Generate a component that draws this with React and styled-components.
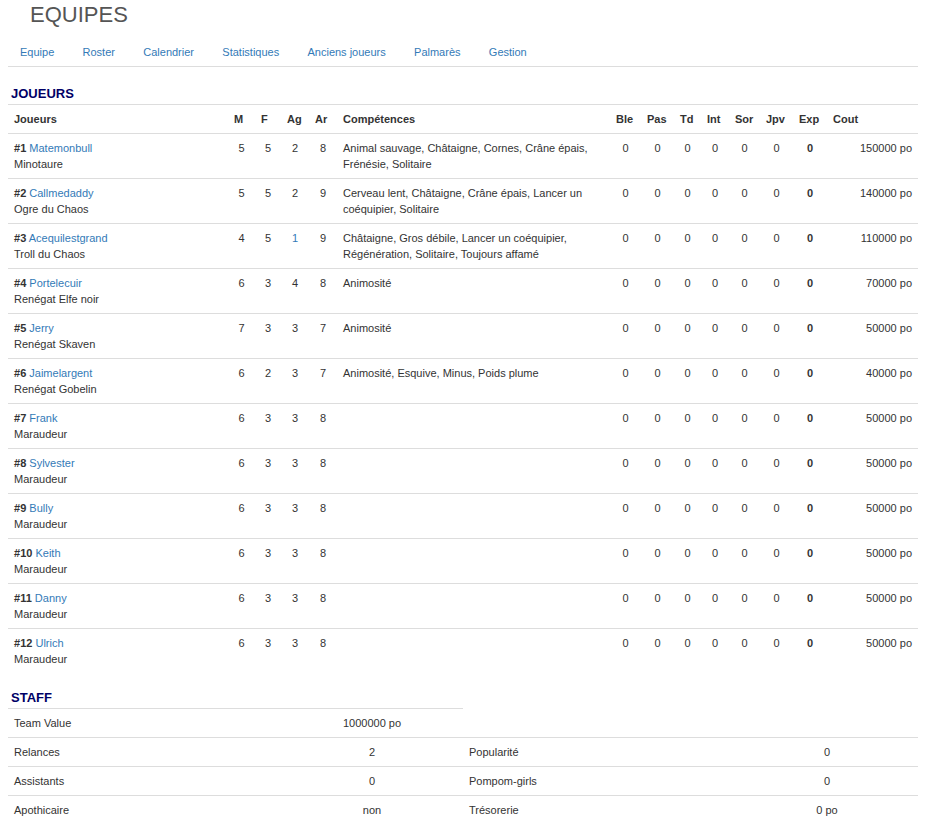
import React from "react";
import { styled, createGlobalStyle } from "styled-components";

const players = [
  { num: 1, name: "Matemonbull", race: "Minotaure", m: 5, f: 5, ag: 2, ar: 8, skills: "Animal sauvage, Châtaigne, Cornes, Crâne épais, Frénésie, Solitaire", cost: 150000 },
  { num: 2, name: "Callmedaddy", race: "Ogre du Chaos", m: 5, f: 5, ag: 2, ar: 9, skills: "Cerveau lent, Châtaigne, Crâne épais, Lancer un coéquipier, Solitaire", cost: 140000 },
  { num: 3, name: "Acequilestgrand", race: "Troll du Chaos", m: 4, f: 5, ag: 1, ar: 9, skills: "Châtaigne, Gros débile, Lancer un coéquipier, Régénération, Solitaire, Toujours affamé", cost: 110000, boosted: ["ag"] },
  { num: 4, name: "Portelecuir", race: "Renégat Elfe noir", m: 6, f: 3, ag: 4, ar: 8, skills: "Animosité", cost: 70000 },
  { num: 5, name: "Jerry", race: "Renégat Skaven", m: 7, f: 3, ag: 3, ar: 7, skills: "Animosité", cost: 50000 },
  { num: 6, name: "Jaimelargent", race: "Renégat Gobelin", m: 6, f: 2, ag: 3, ar: 7, skills: "Animosité, Esquive, Minus, Poids plume", cost: 40000 },
  { num: 7, name: "Frank", race: "Maraudeur", m: 6, f: 3, ag: 3, ar: 8, skills: "", cost: 50000 },
  { num: 8, name: "Sylvester", race: "Maraudeur", m: 6, f: 3, ag: 3, ar: 8, skills: "", cost: 50000 },
  { num: 9, name: "Bully", race: "Maraudeur", m: 6, f: 3, ag: 3, ar: 8, skills: "", cost: 50000 },
  { num: 10, name: "Keith", race: "Maraudeur", m: 6, f: 3, ag: 3, ar: 8, skills: "", cost: 50000 },
  { num: 11, name: "Danny", race: "Maraudeur", m: 6, f: 3, ag: 3, ar: 8, skills: "", cost: 50000 },
  { num: 12, name: "Ulrich", race: "Maraudeur", m: 6, f: 3, ag: 3, ar: 8, skills: "", cost: 50000 },
];

const columns = [
  { label: "Joueurs", width: 220 },
  { label: "M", width: 27 },
  { label: "F", width: 26 },
  { label: "Ag", width: 28 },
  { label: "Ar", width: 28 },
  { label: "Compétences", width: 273 },
  { label: "Ble", width: 31 },
  { label: "Pas", width: 33 },
  { label: "Td", width: 27 },
  { label: "Int", width: 28 },
  { label: "Sor", width: 31 },
  { label: "Jpv", width: 33 },
  { label: "Exp", width: 34 },
  { label: "Cout", width: 91 },
];

const tabs = ["Equipe", "Roster", "Calendrier", "Statistiques", "Anciens joueurs", "Palmarès", "Gestion"];

const GlobalStyle = createGlobalStyle`
  body {
    margin: 0;
    background: #fff;
    font-family: "Liberation Sans", Arial, sans-serif;
    font-size: 11px;
    line-height: 16px;
    color: #333;
  }
`;

const Page = styled.div`
  padding: 0 8px;
`;

const Title = styled.h1`
  margin: 0;
  padding: 2px 0 0 22px;
  font-size: 22px;
  line-height: 26px;
  font-weight: normal;
  color: #555;
`;

const Tabs = styled.nav`
  display: flex;
  gap: 4.3px;
  margin-top: 5px;
  border-bottom: 1px solid #ddd;
`;

const Tab = styled.a`
  padding: 11px 12px 6px;
  color: #337ab7;
  text-decoration: none;
`;

const SectionTitle = styled.h2`
  margin: 19px 0 0;
  padding: 0 3px 2px;
  width: ${(p) => p.$width || "auto"};
  box-sizing: border-box;
  font-size: 13px;
  line-height: 16px;
  font-weight: bold;
  color: #000066;
  border-bottom: 1px solid #ddd;
`;

const Table = styled.table`
  width: 100%;
  table-layout: fixed;
  border-collapse: collapse;
  border-spacing: 0;
`;

const Th = styled.th`
  padding: 6px;
  text-align: left;
  font-weight: bold;
  border-bottom: 1px solid #ddd;
`;

const Td = styled.td`
  padding: 6px;
  vertical-align: top;
  text-align: ${(p) => p.$align || "left"};
  font-weight: ${(p) => (p.$bold ? "bold" : "normal")};
  color: ${(p) => (p.$boosted ? "#337ab7" : "inherit")};
  border-top: ${(p) => (p.$noBorder ? "none" : "1px solid #ddd")};
`;

const Num = styled.b``;

const PlayerLink = styled.a`
  color: #337ab7;
  text-decoration: none;
`;

const StaffSection = styled.div`
  margin-top: -2px;
`;

const statKeys = ["m", "f", "ag", "ar"];

const PlayerRow = ({ p }) => (
  <tr>
    <Td>
      <Num>#{p.num}</Num> <PlayerLink href="#">{p.name}</PlayerLink>
      <br />
      {p.race}
    </Td>
    {statKeys.map((k) => (
      <Td key={k} $align="center" $boosted={p.boosted && p.boosted.includes(k)}>
        {p[k]}
      </Td>
    ))}
    <Td>{p.skills}</Td>
    {[0, 1, 2, 3, 4, 5].map((i) => (
      <Td key={i} $align="center">0</Td>
    ))}
    <Td $align="center" $bold>0</Td>
    <Td $align="right">{p.cost} po</Td>
  </tr>
);

const staffRows = [
  ["Relances", "2", "Popularité", "0"],
  ["Assistants", "0", "Pompom-girls", "0"],
  ["Apothicaire", "non", "Trésorerie", "0 po"],
];

export default function App() {
  return (
    <>
      <GlobalStyle />
      <Page>
        <Title>EQUIPES</Title>
        <Tabs>
          {tabs.map((t) => (
            <Tab key={t} href="#">{t}</Tab>
          ))}
        </Tabs>

        <SectionTitle>JOUEURS</SectionTitle>
        <Table>
          <colgroup>
            {columns.map((c) => (
              <col key={c.label} style={{ width: c.width }} />
            ))}
          </colgroup>
          <thead>
            <tr>
              {columns.map((c) => (
                <Th key={c.label}>{c.label}</Th>
              ))}
            </tr>
          </thead>
          <tbody>
            {players.map((p) => (
              <PlayerRow key={p.num} p={p} />
            ))}
          </tbody>
        </Table>

        <StaffSection>
          <SectionTitle $width="455px">STAFF</SectionTitle>
          <Table>
            <colgroup>
              <col style={{ width: 273 }} />
              <col style={{ width: 182 }} />
              <col style={{ width: 273 }} />
              <col style={{ width: 182 }} />
            </colgroup>
            <tbody>
              <tr>
                <Td $noBorder>Team Value</Td>
                <Td $noBorder $align="center">1000000 po</Td>
                <Td $noBorder />
                <Td $noBorder />
              </tr>
              {staffRows.map((r) => (
                <tr key={r[0]}>
                  <Td>{r[0]}</Td>
                  <Td $align="center">{r[1]}</Td>
                  <Td>{r[2]}</Td>
                  <Td $align="center">{r[3]}</Td>
                </tr>
              ))}
            </tbody>
          </Table>
        </StaffSection>
      </Page>
    </>
  );
}
